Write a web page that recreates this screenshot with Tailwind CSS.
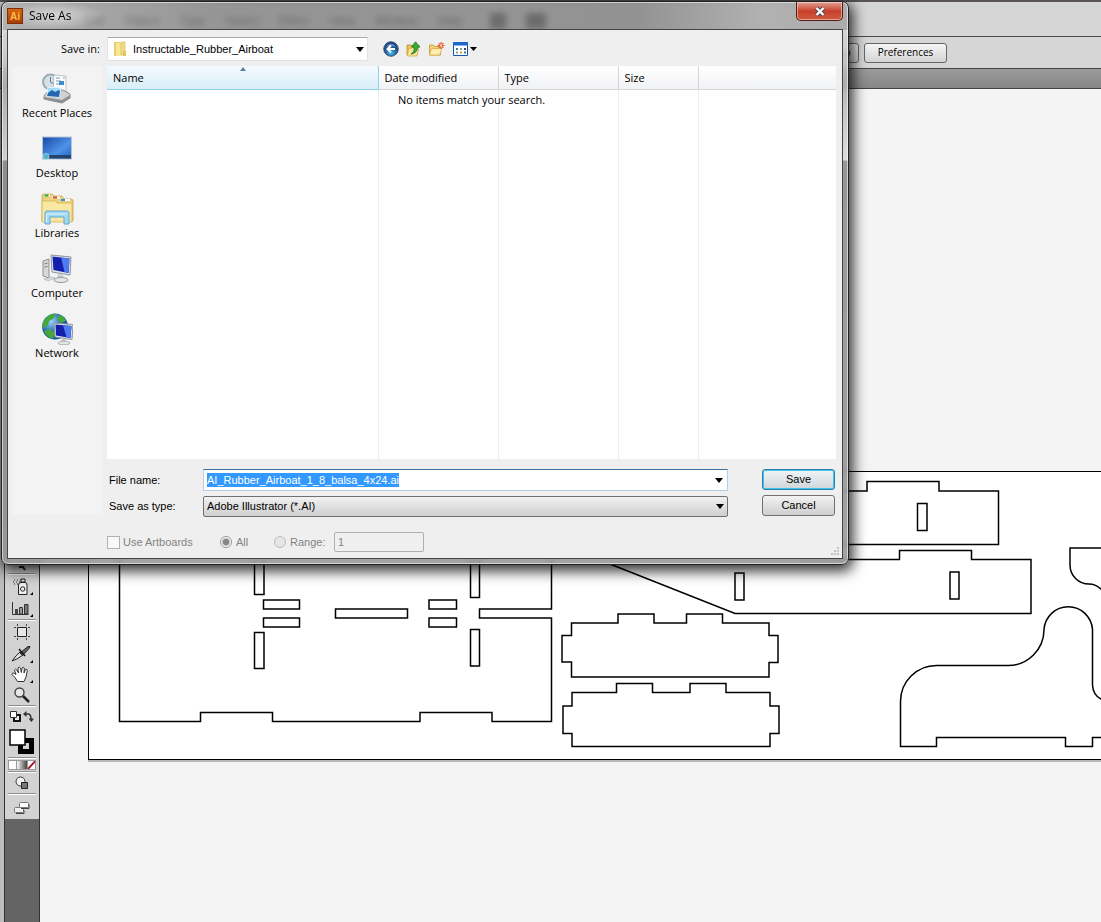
<!DOCTYPE html>
<html lang="en">
<head>
  <meta charset="UTF-8">
  <meta name="viewport" content="width=device-width, initial-scale=1.0">
  <title>Save As</title>
  <script src="https://cdn.jsdelivr.net/npm/@tailwindcss/browser@4"></script>
</head>
<body class="relative flex flex-col min-h-screen overflow-hidden bg-[#f4f4f4] text-black text-[11px] font-['Liberation_Sans',Arial,sans-serif]">

  <!-- Application menu bar -->
  <nav class="flex items-center h-9 pl-[84px] pt-1 gap-5 border-t-2 border-[#5a5456] bg-[#d6d6d6] text-[12px]" aria-label="Application menu">
    <span>Edit</span><span>Object</span><span>Type</span><span>Select</span><span>Effect</span><span>View</span><span>Window</span><span>Help</span>
    <span class="ml-2 size-4 bg-[#222]"></span>
    <span class="h-4 w-5 bg-[#222]"></span>
  </nav>

  <!-- Control bar -->
  <div class="flex items-center h-8 pl-[764px] border-t border-[#4a4a4a] bg-[#d6d6d6] gap-[5px] font-['Open_Sans',sans-serif] text-[10px]">
    <button class="h-5 w-[95px] shrink-0 rounded-[3px] border border-[#666] bg-linear-to-b from-[#f2f2f2] to-[#d0d0d0]">Document Setup</button>
    <button class="h-5 w-[83px] shrink-0 rounded-[3px] border border-[#666] bg-linear-to-b from-[#f6f6f6] to-[#d4d4d4]">Preferences</button>
  </div>

  <!-- Document tab strip -->
  <div class="h-[21px] border-y border-[#444] bg-linear-to-b from-[#9a9a9a] to-[#878787]"></div>

  <div class="flex flex-1">
    <!-- Tools panel -->
    <aside class="flex flex-col w-10 shrink-0 border-l-4 border-[#bdbdbd]">
      <div class="flex flex-col justify-end h-[730px] border-x border-[#333] bg-[#d2d2d2] px-[3px]">
        <button class="flex justify-center h-[11px]" aria-label="Rotate"><svg width="20" height="11"><path d="M7 5h4l2 3" stroke="#222" stroke-width="2" fill="none"/></svg></button>
        <div class="h-0.5 border-t border-[#8f8f8f] bg-white"></div>
        <button class="flex items-center justify-center h-[23px]" aria-label="Symbol sprayer">
          <svg width="24" height="20" viewBox="0 0 24 20"><path d="M4 3h1M7 3h1M10 3h1M3 5h1M6 5h1M9 5h1M4 7h1M7 7h1" stroke="#222"/><path d="M11 2h4v3h-4z" fill="#ddd" stroke="#222"/><path d="M8.500 8q0-2.500 2.500-2.500h4q2 0 2 2.500v9.500h-8.500z" fill="#eee" stroke="#222"/><circle cx="12.700" cy="12" r="2.200" fill="none" stroke="#222"/><path d="M23 15v3h-3z"/></svg>
        </button>
        <button class="flex items-center justify-center h-[21px]" aria-label="Column graph">
          <svg width="24" height="18" viewBox="0 0 24 18"><path d="M2.500 2v12.500h16" fill="none" stroke="#333"/><path d="M5 9h3v5H5z" fill="#444"/><path d="M9.500 7.500h3v6.500h-3z" fill="#999" stroke="#333"/><path d="M14.500 4.500h3.500v9.500h-3.500z" fill="#777" stroke="#333"/><path d="M23 14v3h-3z"/></svg>
        </button>
        <div class="h-0.5 border-t border-[#8f8f8f] bg-white"></div>
        <button class="flex items-center justify-center h-[22px]" aria-label="Artboard">
          <svg width="20" height="18" viewBox="0 0 20 18"><path d="M5.500 4.500h9v9h-9z" fill="#e6e6e6" stroke="#222"/><path d="M5.500 1v2M14.500 1v2M5.500 15v2M14.500 15v2M2 4.500h2M2 13.500h2M16 4.500h2M16 13.500h2" stroke="#444"/></svg>
        </button>
        <button class="flex items-center justify-center h-[21px]" aria-label="Slice">
          <svg width="24" height="18" viewBox="0 0 24 18"><path d="M2 16q4-6 8-9l3 3q-5 4-11 6z" fill="#ddd" stroke="#222"/><path d="M10 8l8-6.500 2 0-1 2-6.500 7z" fill="#666" stroke="#222"/><path d="M9 4l6 7" stroke="#111" stroke-width="1.500"/><path d="M23 15v3h-3z"/></svg>
        </button>
        <button class="flex items-center justify-center h-[21px]" aria-label="Hand">
          <svg width="24" height="19" viewBox="0 0 24 19"><path d="M7.500 16.500L5 12.500 2 9.500q0-2 2-1.500l2 1.500L4.500 5q1-2 2.300 0L8.500 8 8 3q1.300-2 2.500 0L11.300 7.500 12 3q1.500-1.500 2.300 0L14 8l1.500-3.500q1.800-.8 1.800 1L16 12l-2 4.500z" fill="#fff" stroke="#333"/><path d="M23 15v3h-3z"/></svg>
        </button>
        <button class="flex items-center justify-center h-5" aria-label="Zoom">
          <svg width="20" height="18" viewBox="0 0 20 18"><circle cx="7.500" cy="6.500" r="4.500" fill="#e8e8e8" stroke="#444" stroke-width="1.400"/><path d="M11 10l6 6" stroke="#222" stroke-width="2.500"/></svg>
        </button>
        <div class="h-0.5 border-t border-[#8f8f8f] bg-white"></div>
        <div class="flex items-center justify-between h-[19px] px-0.5">
          <button aria-label="Default fill and stroke"><svg width="11" height="11"><path d="M4 4h6v6H4z" fill="#eee" stroke="#111" stroke-width="2"/><path d="M.5.5h6v6h-6z" fill="#fff" stroke="#333"/></svg></button>
          <button aria-label="Swap fill and stroke"><svg width="11" height="11"><path d="M2 3h3q3 0 3 5" fill="none" stroke="#333" stroke-width="1.500"/><path d="M0 3l3.500-3v6zM8.500 11l-3-3.500h5.500z" fill="#333"/></svg></button>
        </div>
        <div class="flex items-center justify-center h-[31px]">
          <svg width="26" height="26" role="img" aria-label="Fill white, stroke black"><path d="M9 9h16v16H9zM14 14v6h6v-6z" fill-rule="evenodd"/><path d="M1 1h15v15H1z" fill="#fff" stroke="#000" stroke-width="1.500"/></svg>
        </div>
        <div class="h-0.5 border-t border-[#8f8f8f] bg-white"></div>
        <div class="grid grid-cols-3 h-3 py-px">
          <button class="border border-[#999] bg-white" aria-label="Color"></button>
          <button class="border-y border-[#999] bg-linear-to-r from-white to-[#444]" aria-label="Gradient"></button>
          <button class="border border-[#999] bg-white" aria-label="None"><svg class="size-full" viewBox="0 0 8 8" preserveAspectRatio="none"><path d="M0 8l8-8" stroke="#a5142c" stroke-width="2"/></svg></button>
        </div>
        <div class="h-0.5 border-t border-[#8f8f8f] bg-white"></div>
        <button class="flex items-center justify-center h-5" aria-label="Drawing mode">
          <svg width="14" height="14"><circle cx="5.500" cy="5.500" r="4.500" fill="#f2f2f2" stroke="#333"/><path d="M6.500 6.500h6v6h-6z" fill="#777" stroke="#222"/></svg>
        </button>
        <div class="h-0.5 border-t border-[#8f8f8f] bg-white"></div>
        <button class="flex items-center justify-center h-6" aria-label="Screen mode">
          <svg width="16" height="13"><rect x=".5" y="6.500" width="9" height="5" rx="1" fill="#eee" stroke="#777"/><path d="M2 12.500h8v-3" fill="none" stroke="#444"/><rect x="5.500" y="1.500" width="9" height="5" rx="1" fill="#fff" stroke="#777"/><path d="M7 7.500h8v-4" fill="none" stroke="#444"/></svg>
        </button>
      </div>
      <div class="flex-1 border-x border-[#333] bg-[#646464]"></div>
    </aside>

    <!-- Canvas with the cutting layout -->
    <main class="flex-1 min-w-0 pl-12 pt-[382px]">
      <div class="h-[289px] border-y border-l border-black bg-white shadow-[0_2px_0_#b8b8b8]">
        <svg class="block w-full h-full" role="img" aria-label="Airboat parts laid out on a balsa sheet">
          <g transform="translate(-89 -472)" fill="none" stroke="#000" stroke-width="1.500">
            <path d="M119.500 540V721.500H200.500V712.500H272.500V721.500H420V712.500H492V721.500H551.500V618H479.500V609H551.500V540"/>
            <path d="M254.500 540V594.500H264V540M254.500 632.500h9.500v36h-9.500zM470.500 540V597.500H479.500V540M470.500 629.500h9v36.500h-9z"/>
            <path d="M263.500 600h36v9h-36zM263.500 618h36v9h-36zM335.500 609h72v9h-72zM429 600h27.500v9h-27.500zM429 618h27.500v9h-27.500z"/>
            <path d="M800 491H867V481.500H939V491H998.500V544.500H800M917.500 503.500h9.500v27h-9.500z"/>
            <path d="M610 564L735 613.500H1031V559.500H971.500V550.500H899.500V559.500H800M735 573h9v27h-9zM950 572h9v27h-9z"/>
            <path d="M571.500 623H618V614H654V623H686.500V614H722.500V623H769V635.500H778V662.500H769V677H571.500V662H562V635.500H571.500z"/>
            <path d="M572 692.500H616.500V683.500H652.500V692.500H690V683.500H726V692.500H770V706H779V733.500H770V746.500H572V733.500H563V706H572z"/>
            <path d="M1110 737.500H1092.500V746.500H1065.500V737.500H936.500V746.500H900.500V701.500A36 36 0 0 1 936.500 665.500H1008A36 36 0 0 0 1044 629.500A24.300 24.300 0 0 1 1092.500 629.500V685Q1093 695 1101 699Q1105 701 1110 701"/>
            <path d="M1110 548H1070V565A19 19 0 0 0 1089 584Q1096 584 1102 590"/>
          </g>
        </svg>
      </div>
    </main>
  </div>

  <!-- Save As window -->
  <section role="dialog" aria-labelledby="dlgTitle" class="absolute left-px top-px w-[848px] rounded-[7px] border border-[#222] px-[5px] pb-[5px] backdrop-blur-[3px] [background:linear-gradient(90deg,#a8a8a8c8,#848484c8_25%,#808080c8_75%,#a8a8a8c8_90%,#a0a0a0c8)_0_0/100%_28px_no-repeat,linear-gradient(#0000_28px,#d8d8d8d0_28px,#b0b0b0d0_90px,#d8d8d8d0_158px,#888888dd_159px,#929292d8_100%)] shadow-[inset_0_0_0_1px_#ffffff90,2px_4px_14px_2px_#000000d0]">
    <header class="flex items-start justify-between h-[27px]">
      <div class="flex items-center gap-[6px] h-[27px] pr-8 bg-[radial-gradient(ellipse_at_center,#ffffff80,#ffffff00_72%)]">
        <svg width="16" height="16" viewBox="0 0 16 16"><defs><linearGradient id="ai" x2="0" y2="1"><stop stop-color="#d96a10"/><stop offset="1" stop-color="#a83c06"/></linearGradient></defs><rect x=".5" y=".5" width="15" height="15" fill="url(#ai)" stroke="#7c3006"/><text x="3" y="12" font-size="10" font-weight="bold" font-family="Liberation Sans" fill="#ffc04a">Ai</text></svg>
        <h1 id="dlgTitle" class="text-[12px] font-['Open_Sans',sans-serif]">Save As</h1>
      </div>
      <button class="flex items-center justify-center w-[47px] h-[19px] rounded-b-[5px] border border-t-0 border-[#571a14] bg-linear-to-b from-[#e0a094] via-[#c8402c] via-50% to-[#cf5a3c] shadow-[inset_0_0_0_1px_#ffffff70]" aria-label="Close">
        <svg width="12" height="11" viewBox="0 0 12 11"><path d="M2.500 2l7 7M9.500 2l-7 7" stroke="#4d4550" stroke-width="4.200"/><path d="M2.500 2l7 7M9.500 2l-7 7" stroke="#fff" stroke-width="2.400"/></svg>
      </button>
    </header>

    <form class="border border-[#444] bg-[#efefef] pl-1 pr-[6px] pt-[7px]">
      <!-- Folder row -->
      <div class="flex items-center h-6">
        <label for="saveIn" class="w-[88px] mr-[7px] text-right font-['Open_Sans',sans-serif]">Save in:</label>
        <div class="relative w-[261px]">
          <select id="saveIn" class="appearance-none block w-full h-6 pl-[25px] bg-white border border-[#e2e3ea] border-t-[#abadb3]">
            <option>Instructable_Rubber_Airboat</option>
          </select>
          <svg class="absolute left-[6px] top-1 pointer-events-none" width="14" height="16" viewBox="0 0 14 16"><path d="M1 1h6v14H1z" fill="#e9cf6b"/><path d="M3 2h5v13H3z" fill="#f7e79b"/><path d="M8 1h4v13H8z" fill="#f3dc82" stroke="#d3b24c" stroke-width=".6"/><path d="M10 10h3v5h-3z" fill="#e5c45a"/></svg>
          <svg class="absolute right-1 top-[10px] pointer-events-none" width="8" height="5"><path d="M0 0h8L4 5z"/></svg>
        </div>
        <div class="flex items-center gap-[6px] ml-[15px]">
          <button type="button" aria-label="Back">
            <svg width="16" height="16" viewBox="0 0 16 16"><defs><radialGradient id="bk" cx=".5" cy=".8"><stop stop-color="#3fb6ea"/><stop offset="1" stop-color="#1d4c8c"/></radialGradient></defs><circle cx="8" cy="8" r="7.200" fill="url(#bk)" stroke="#29476e"/><path d="M2.500 6q5-6 11 0q-5-2-11 0z" fill="#fff" opacity=".4"/><path d="M12 8H5M8 4.500L4.500 8 8 11.500" fill="none" stroke="#fff" stroke-width="2"/></svg>
          </button>
          <button type="button" aria-label="Up one level">
            <svg width="17" height="16" viewBox="0 0 17 16"><path d="M2 4h4l1 1h5v9H2z" fill="#e6c65c" stroke="#c79b35"/><path d="M3.500 7.500L14 6l-2 9H2.500z" fill="#f9e59a" stroke="#cfa540" stroke-width=".7"/><path d="M6 13q4-2 3-7H6.500L10.500.8 15 6h-2.500q0 6-6.500 7z" fill="#35b233" stroke="#1d6f1f" stroke-width=".8"/></svg>
          </button>
          <button type="button" aria-label="Create new folder">
            <svg width="17" height="16" viewBox="0 0 17 16"><path d="M1.500 4h4l1 1.500h6V14h-11z" fill="#f0d277" stroke="#d0a644"/><path d="M3.500 7.500H14L11.500 14h-10z" fill="#fdeeb0" stroke="#d5ad4c" stroke-width=".8"/><path d="M13 1v7M9.500 4.500h7M10.600 2.100l4.800 4.800M15.400 2.100l-4.800 4.800" stroke="#e2522c" stroke-width="1.100"/><circle cx="13" cy="4.500" r="1.200" fill="#ffd9a0"/></svg>
          </button>
          <button type="button" class="ml-0.5" aria-label="View menu">
            <svg width="25" height="14" viewBox="0 0 25 14"><path d="M.5.500h14v13H.5z" fill="#fff" stroke="#1557b5"/><path d="M0 0h15v3.500H0z" fill="#1e68cc"/><path d="M3 6h2v2H3zM11 9.500h2v2h-2z" fill="#4a70a8"/><path d="M7 6h2v2H7zM3 9.500h2v2H3z" fill="#7a8"/><path d="M11 6h2v2h-2z" fill="#446"/><path d="M7 9.500h2v2H7z" fill="#d59a3a"/><path d="M17 5h7l-3.500 4z"/></svg>
          </button>
        </div>
      </div>

      <div class="flex gap-[5px] mt-[5px]">
        <!-- Places bar -->
        <nav class="flex flex-col w-[90px] h-[449px] shrink-0 bg-[#f3f3f3] font-['Open_Sans',sans-serif]" aria-label="Places">
          <button type="button" class="flex flex-col items-center h-[60px] pt-[7px] leading-4 whitespace-nowrap">
            <svg width="32" height="32" viewBox="0 0 32 32"><circle cx="9.500" cy="9" r="7.500" fill="#d5e0e6" stroke="#9dacb4" stroke-width="2"/><path d="M9.500 4v5l3.500 2" stroke="#678" fill="none"/><path d="M13 2l12 1v16H12z" fill="#fbfdff" stroke="#a9b6c0" stroke-width=".8"/><path d="M15 5h4M15 8h5M22 5h2M15 11h3" stroke="#7a93ad"/><path d="M18 8h5v4h-5z" fill="#3d8fcb"/><path d="M3 23l5-6h14l7 4v4l-8 5-18-4z" fill="#cfd2d4" stroke="#888"/><path d="M7 14l13 1-2 9-12-1z" fill="#9edcf7" stroke="#e9f5fa"/><path d="M7 20l4-3 3 2 4-2 1 1-1 6-12-1z" fill="#2467b0"/><path d="M3 24l18 3 8-5v3l-8 5-18-4z" fill="#8d9194"/></svg>
            Recent Places
          </button>
          <button type="button" class="flex flex-col items-center h-[60px] pt-[7px] leading-4">
            <svg width="32" height="32" viewBox="0 0 32 32"><defs><linearGradient id="dk" x2="1" y2="1"><stop stop-color="#1749a8"/><stop offset=".6" stop-color="#4e93e8"/><stop offset="1" stop-color="#2361c0"/></linearGradient></defs><rect x="1" y="3.500" width="30" height="23" fill="#b9c4d2"/><rect x="2" y="4.500" width="28" height="21" fill="url(#dk)"/><path d="M2 22h28v3.500H2z" fill="#25436b"/><circle cx="5" cy="23.500" r="3" fill="#4fb2c6" stroke="#cfe8ee" stroke-width=".6"/></svg>
            Desktop
          </button>
          <button type="button" class="flex flex-col items-center h-[60px] pt-[7px] leading-4">
            <svg width="34" height="32" viewBox="0 0 34 32"><path d="M2 3q0-2 2-2h8l2 2h8l2 3h7q2 0 2 2v20H2z" fill="#ecd07a" stroke="#c9a550" stroke-width=".8"/><path d="M2 8h13l2 2h15v19H2z" fill="#fae8a2" stroke="#d4b35c" stroke-width=".8"/><path d="M4 2.500h6M12 4.500h8M21 7h9" stroke="#fff" stroke-width="2"/><path d="M4.500 2.500h4" stroke="#20a43a" stroke-width="2"/><path d="M13 4.500h4" stroke="#d4452c" stroke-width="2"/><path d="M21 7h4" stroke="#3390dd" stroke-width="2"/><path d="M5 31V20q0-2 2-2h20q2 0 2 2v11h-5v-7H10v7z" fill="#9fd8f2" stroke="#62a9d0"/><path d="M6.500 29v-8h21" fill="none" stroke="#dff4fd"/></svg>
            Libraries
          </button>
          <button type="button" class="flex flex-col items-center h-[60px] pt-[7px] leading-4">
            <svg width="32" height="32" viewBox="0 0 32 32"><path d="M2 8l6-2v19l-6-2z" fill="#d6d8da" stroke="#8b8f93"/><path d="M3.500 11l3-1M3.500 14l3-.5" stroke="#777"/><path d="M10 2l20 2-1 18-18-3z" fill="#dfe3e8" stroke="#8d949c"/><path d="M11.500 3.500l17 2-1 14.500-15-3z" fill="#1320ac"/><path d="M20 4.500l8.500 1-1 14.500-4-1z" fill="#4f7af0"/><path d="M17 21l5 1 1 4h-7z" fill="#c5c9cd"/><ellipse cx="20" cy="27" rx="7" ry="2.500" fill="#e4e6e8" stroke="#999"/><path d="M3 26l8-2 3 1-7 3z" fill="#ddd" stroke="#aaa" stroke-width=".6"/></svg>
            Computer
          </button>
          <button type="button" class="flex flex-col items-center h-[60px] pt-[7px] leading-4">
            <svg width="32" height="32" viewBox="0 0 32 32"><defs><radialGradient id="gl" cx=".35" cy=".3"><stop stop-color="#9ad6fa"/><stop offset="1" stop-color="#1553a8"/></radialGradient></defs><circle cx="14" cy="13.500" r="13" fill="url(#gl)"/><path d="M4 6q5-6 11-5l-3 5-4 2-1 4-5 4q-1-6 2-10zM18 2q5 1 7 6l-5 2-4-4zM3 18l6-2 5 4-2 6q-7-2-9-8z" fill="#45a83b"/><path d="M13 10l19 1.500-1 15-17-2.500z" fill="#dfe3e8" stroke="#8d949c"/><path d="M14.500 11.500l16 1.500-1 12-14.500-2.500z" fill="#1320ac"/><path d="M22 12.300l8.500.7-1 12-4-.8z" fill="#4f7af0"/><path d="M21 26l4 .5v3h-5z" fill="#c5c9cd"/><ellipse cx="23" cy="30" rx="6" ry="1.800" fill="#e4e6e8" stroke="#999" stroke-width=".7"/></svg>
            Network
          </button>
        </nav>

        <div class="flex-1 min-w-0">
          <!-- File list -->
          <div class="relative h-[393px] bg-white font-['Open_Sans',sans-serif]">
            <table class="w-full h-full table-fixed border-collapse text-left">
              <colgroup><col class="w-[271px]"><col class="w-[120px]"><col class="w-[120px]"><col class="w-[80px]"><col></colgroup>
              <thead>
                <tr class="h-[23px] bg-linear-to-b from-white to-[#f1f2f4]">
                  <th class="relative px-[6px] pt-px font-normal border-r border-b border-[#8fd0ea] bg-linear-to-b from-[#f4fafd] to-[#d8eef8]" aria-sort="ascending">Name
                    <svg class="absolute left-[133px] top-px" width="6" height="4"><path d="M0 4l3-4 3 4z" fill="#5a7f9c"/></svg>
                  </th>
                  <th class="px-[6px] pt-px font-normal border-r border-b border-[#d5d5d5]">Date modified</th>
                  <th class="px-[6px] pt-px font-normal border-r border-b border-[#d5d5d5]">Type</th>
                  <th class="px-[6px] pt-px font-normal border-r border-b border-[#d5d5d5]">Size</th>
                  <th class="border-b border-[#d5d5d5]"></th>
                </tr>
              </thead>
              <tbody>
                <tr>
                  <td class="border-r border-[#ececec]"></td>
                  <td class="border-r border-[#ececec]"></td>
                  <td class="border-r border-[#ececec]"></td>
                  <td class="border-r border-[#ececec]"></td>
                  <td></td>
                </tr>
              </tbody>
            </table>
            <p class="absolute inset-x-0 top-[26px] text-center leading-4">No items match your search.</p>
          </div>

          <!-- File name and type -->
          <div class="flex items-start justify-between mt-[10px] pr-px">
            <div class="grid grid-cols-[96px_525px] items-center gap-y-[5px]">
              <label for="fileName" class="pl-0.5">File name:</label>
              <div class="flex items-center h-[22px] pl-[3px] pr-1 bg-white border border-[#b5cfe7] border-t-[#3d6ea0]">
                <input id="fileName" type="text" value="AI_Rubber_Airboat_1_8_balsa_4x24.ai" class="flex-1 h-[14px] outline-none selection:bg-[#3399ff] selection:text-white" spellcheck="false" autofocus>
                <button type="button" aria-label="Recent file names"><svg width="8" height="5"><path d="M0 0h8L4 5z"/></svg></button>
              </div>
              <label for="fileType" class="pl-0.5">Save as type:</label>
              <div class="relative">
                <select id="fileType" class="appearance-none block w-full h-[21px] pl-[3px] rounded-[2px] border border-[#707070] bg-linear-to-b from-[#f2f2f2] to-[#cfcfcf]">
                  <option>Adobe Illustrator (*.AI)</option>
                </select>
                <svg class="absolute right-1 top-2 pointer-events-none" width="8" height="5"><path d="M0 0h8L4 5z"/></svg>
              </div>
            </div>
            <div class="flex flex-col gap-[5px] w-[73px]">
              <button type="submit" class="h-[21px] rounded-[3px] border border-[#2c7fa8] bg-linear-to-b from-[#f0f4f6] to-[#cfd6da] shadow-[inset_0_0_0_1px_#3fc4f0]">Save</button>
              <button type="button" class="h-[21px] rounded-[3px] border border-[#707070] bg-linear-to-b from-[#f2f2f2] to-[#cfcfcf]">Cancel</button>
            </div>
          </div>
        </div>
      </div>

      <!-- Artboard options -->
      <div class="relative flex items-center h-5 mt-[15px] mb-[6px] pl-[95px] text-[#838383]">
        <label class="flex items-center gap-[3px] w-[113px]"><input type="checkbox" disabled class="appearance-none size-[13px] border border-[#b1b1b1] bg-[#f8f8f8]">Use Artboards</label>
        <label class="flex items-center gap-1 w-[54px]"><input type="radio" name="range" disabled checked class="appearance-none size-3 rounded-full border border-[#999] bg-[radial-gradient(#888_0_3px,#f4f4f4_4px)]">All</label>
        <label class="flex items-center gap-1 w-[60px]"><input type="radio" name="range" disabled class="appearance-none size-3 rounded-full border border-[#bbb] bg-[#e6e6e6]">Range:</label>
        <input type="text" value="1" disabled aria-label="Artboard range" class="w-[90px] h-5 px-[3px] rounded-[2px] border border-[#afafaf]">
        <svg class="absolute right-[-4px] bottom-[-4px]" width="9" height="9"><path d="M6 0h2v2H6zM6 3h2v2H6zM6 6h2v2H6zM3 3h2v2H3zM3 6h2v2H3zM0 6h2v2H0z" fill="#c4c4c4"/></svg>
      </div>
    </form>
  </section>

  <script>
    // Preselect the file name so typing replaces it
    const fileName = document.getElementById("fileName");
    fileName.focus();
    fileName.select();
  </script>
</body>
</html>
